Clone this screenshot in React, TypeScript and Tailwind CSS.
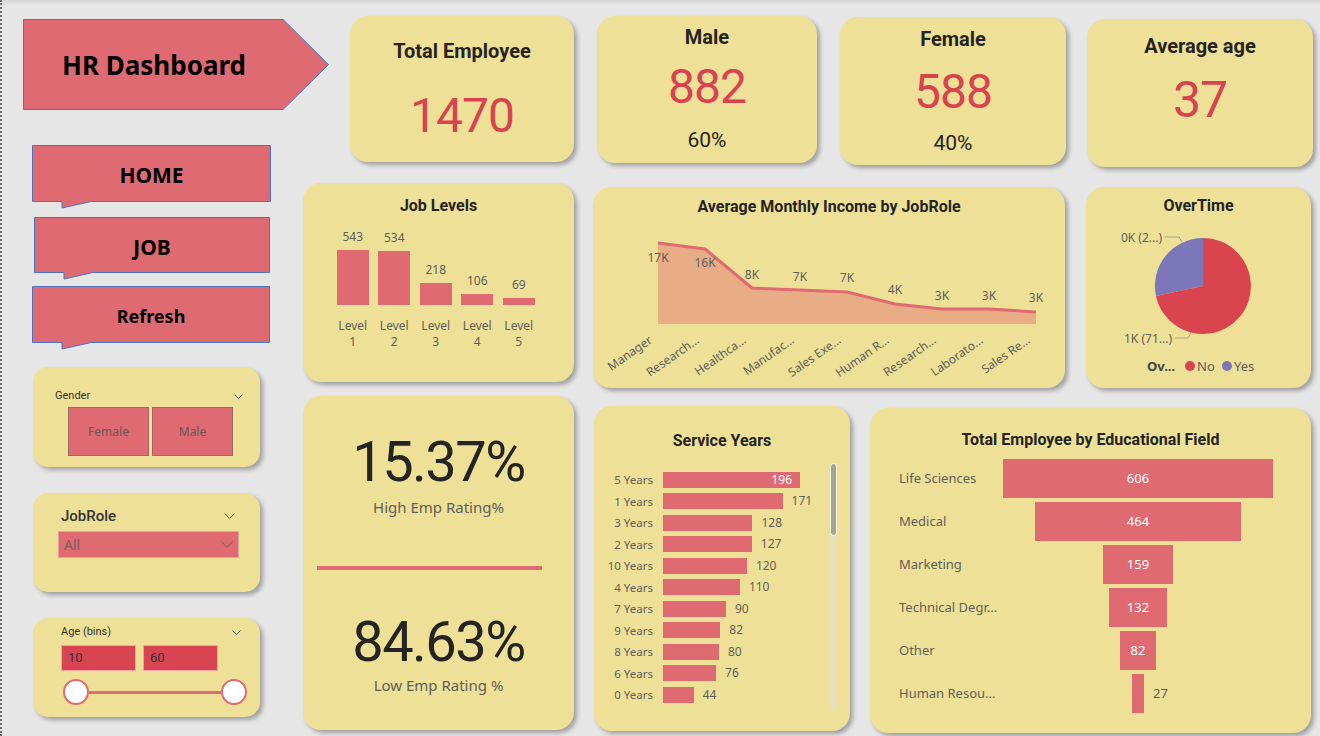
import React from 'react';

const card = 'bg-[#efe097] shadow-[3px_3px_4px_rgba(0,0,0,0.3)]';
const din = "font-['Roboto',sans-serif]";
const segoe = "font-['Noto_Sans',sans-serif]";
const red = '#df6a72';

const jobLevels: [string, number][] = [
    ['1', 543],
    ['2', 534],
    ['3', 218],
    ['4', 106],
    ['5', 69],
];

const incomePts: [number, number, string, string, number][] = [
    [65, 25, '17K', 'Manager', 40],
    [112, 31, '16K', 'Research...', 45],
    [159, 70, '8K', 'Healthca...', 57],
    [207, 72, '7K', 'Manufac...', 59],
    [254, 74, '7K', 'Sales Exe...', 60],
    [302, 86, '4K', 'Human R...', 72],
    [349, 91, '3K', 'Research...', 78],
    [396, 91, '3K', 'Laborato...', 78],
    [443, 94, '3K', 'Sales Re...', 80],
];

const serviceYears: [string, number][] = [
    ['5 Years', 196],
    ['1 Years', 171],
    ['3 Years', 128],
    ['2 Years', 127],
    ['10 Years', 120],
    ['4 Years', 110],
    ['7 Years', 90],
    ['9 Years', 82],
    ['8 Years', 80],
    ['6 Years', 76],
    ['0 Years', 44],
];

const eduFields: [string, number][] = [
    ['Life Sciences', 606],
    ['Medical', 464],
    ['Marketing', 159],
    ['Technical Degr...', 132],
    ['Other', 82],
    ['Human Resou...', 27],
];

const Chevron = ({ w = 10, h = 6, color = '#555' }: { w?: number; h?: number; color?: string }) => (
    <svg width={w} height={h} viewBox={`0 0 ${w} ${h}`}>
        <polyline points={`0.5,0.5 ${w / 2},${h - 0.5} ${w - 0.5},0.5`} fill="none" stroke={color} strokeWidth="1" />
    </svg>
);

const Callout = ({ label, w, h, className, textClass }: { label: string; w: number; h: number; className: string; textClass: string }) => (
    <div className={`relative flex items-center justify-center ${className}`} style={{ width: w, height: h }}>
        <svg className="absolute left-0 top-0 overflow-visible" width={w} height={h}>
            <polygon
                points={`0.5,0.5 ${w - 0.5},0.5 ${w - 0.5},${h - 0.5} 59,${h - 0.5} 30,${h + 6} 30,${h - 0.5} 0.5,${h - 0.5}`}
                fill={red}
                stroke="#4a74c0"
                strokeWidth="1"
            />
        </svg>
        <span className={`relative font-bold text-black ${segoe} ${textClass}`}>{label}</span>
    </div>
);

const App = () => {
    return (
        <div className="w-[1320px] h-[736px] flex overflow-hidden border-l-2 border-dotted border-[#6b6b6b] bg-[#e6e6e6] bg-[linear-gradient(#d4d4d4,#e6e6e6_5px)]">
            {/* left column: title, nav buttons, slicers */}
            <div className="w-[301px] shrink-0 flex flex-col">
                <div className="relative mt-[19px] ml-[21px] w-[306px] h-[91px] flex items-center pl-[39px]">
                    <svg className="absolute left-0 top-0" width="306" height="91">
                        <polygon points="0.5,0.5 260,0.5 305.5,45.5 260,90.5 0.5,90.5" fill={red} stroke="#4a74c0" strokeWidth="1" />
                    </svg>
                    <span className={`relative font-bold text-black text-[26px] leading-none ${segoe}`}>HR Dashboard</span>
                </div>
                <Callout label="HOME" w={239} h={57} className="mt-[35px] ml-[30px]" textClass="text-[21px] pt-[4px]" />
                <Callout label="JOB" w={236} h={56} className="mt-[15px] ml-[32px]" textClass="text-[21px] pt-[5px]" />
                <Callout label="Refresh" w={238} h={57} className="mt-[13px] ml-[30px]" textClass="text-[18px] pt-[3px]" />

                {/* Gender slicer */}
                <div className={`${card} mt-[24px] ml-[31px] w-[227px] h-[100px] rounded-[15px] flex flex-col`}>
                    <div className="mt-[22px] h-[14px] flex items-center justify-between pl-[22px] pr-[17px]">
                        <span className={`${din} text-[11px] text-[#333]`}>Gender</span>
                        <Chevron w={9} h={5} />
                    </div>
                    <div className="mt-[4px] ml-[35px] flex gap-[3px]">
                        <div className={`w-[81px] h-[49px] bg-[#df6a72] border border-[#9c6a62] flex items-center justify-center text-[12px] text-[#6b5656] ${segoe}`}>Female</div>
                        <div className={`w-[81px] h-[49px] bg-[#df6a72] border border-[#9c6a62] flex items-center justify-center text-[12px] text-[#6b5656] ${segoe}`}>Male</div>
                    </div>
                </div>

                {/* JobRole slicer */}
                <div className={`${card} mt-[26px] ml-[31px] w-[227px] h-[99px] rounded-[15px] flex flex-col`}>
                    <div className="mt-[14px] h-[18px] flex items-center justify-between pl-[28px] pr-[25px]">
                        <span className={`${din} text-[15px] font-medium text-[#333]`}>JobRole</span>
                        <Chevron w={11} h={6} />
                    </div>
                    <div className="mt-[6px] ml-[25px] w-[181px] h-[27px] bg-[#df6a72] border border-[#eba0a0] flex items-center justify-between pl-[5px] pr-[5px]">
                        <span className={`${segoe} text-[14px] text-[#7a5c5c]`}>All</span>
                        <Chevron w={12} h={7} color="#7a5c5c" />
                    </div>
                </div>

                {/* Age slicer */}
                <div className={`${card} mt-[26px] ml-[31px] w-[227px] h-[99px] rounded-[15px] flex flex-col`}>
                    <div className="mt-[7px] h-[14px] flex items-center justify-between pl-[28px] pr-[19px]">
                        <span className={`${din} text-[11px] text-[#333]`}>Age (bins)</span>
                        <Chevron w={9} h={5} />
                    </div>
                    <div className="mt-[6px] ml-[28px] flex gap-[7px]">
                        <div className={`w-[75px] h-[26px] bg-[#d84452] border border-[#eaa5a5] flex items-center pl-[6px] text-[13px] text-[#333] ${din}`}>10</div>
                        <div className={`w-[75px] h-[26px] bg-[#d84452] border border-[#eaa5a5] flex items-center pl-[6px] text-[13px] text-[#333] ${din}`}>60</div>
                    </div>
                    <div className="mt-[8px] ml-[30px] w-[184px] flex items-center">
                        <div className="w-[26px] h-[26px] rounded-full bg-white border-2 border-[#df6a72]" />
                        <div className="flex-1 h-[3px] bg-[#df6a72]" />
                        <div className="w-[26px] h-[26px] rounded-full bg-white border-2 border-[#df6a72]" />
                    </div>
                </div>
            </div>

            {/* right area */}
            <div className="flex-1 flex flex-col">
                {/* KPI row */}
                <div className="flex items-start pt-[16px]">
                    <div className={`${card} ml-[47px] w-[224px] h-[146px] rounded-[18px] flex flex-col items-center pt-[22px] ${din}`}>
                        <div className="text-[20px] leading-[26px] font-bold text-[#252423]">Total Employee</div>
                        <div className="mt-[24px] text-[48px] leading-[56px] tracking-[-1px] text-[#d8434f]">1470</div>
                    </div>
                    <div className={`${card} ml-[23px] w-[220px] h-[147px] rounded-[18px] flex flex-col items-center pt-[8px] ${din}`}>
                        <div className="text-[20px] leading-[26px] font-bold text-[#252423]">Male</div>
                        <div className="mt-[9px] text-[48px] leading-[56px] tracking-[-1px] text-[#d8434f]">882</div>
                        <div className="mt-[12px] text-[21px] leading-[26px] text-[#252423]">60%</div>
                    </div>
                    <div className={`${card} ml-[23px] mt-[1px] w-[226px] h-[148px] rounded-[18px] flex flex-col items-center pt-[9px] ${din}`}>
                        <div className="text-[20px] leading-[26px] font-bold text-[#252423]">Female</div>
                        <div className="mt-[12px] text-[48px] leading-[56px] tracking-[-1px] text-[#d8434f]">588</div>
                        <div className="mt-[10px] text-[21px] leading-[26px] text-[#252423]">40%</div>
                    </div>
                    <div className={`${card} ml-[21px] mt-[3px] w-[226px] h-[148px] rounded-[18px] flex flex-col items-center pt-[14px] ${din}`}>
                        <div className="text-[20px] leading-[26px] font-bold text-[#252423]">Average age</div>
                        <div className="mt-[13px] text-[50px] leading-[56px] tracking-[-1px] text-[#d8434f]">37</div>
                    </div>
                </div>

                {/* charts row */}
                <div className="flex items-start mt-[16px]">
                    <div className={`${card} w-[271px] h-[199px] rounded-[18px] flex flex-col`}>
                        <div className={`pt-[12px] text-center text-[16px] leading-[22px] font-bold text-[#252423] ${din}`}>Job Levels</div>
                        <div className="ml-[29px] h-[88px] flex items-end">
                            {jobLevels.map(([lvl, v]) => (
                                <div key={lvl} className="w-[41.5px] flex flex-col items-center">
                                    <span className={`text-[12px] leading-[14px] text-[#605e5c] mb-[6px] ${segoe}`}>{v}</span>
                                    <div className="w-[32px] bg-[#df6a72]" style={{ height: v * 0.1013 }} />
                                </div>
                            ))}
                        </div>
                        <div className="ml-[29px] mt-[13px] flex">
                            {jobLevels.map(([lvl]) => (
                                <div key={lvl} className={`w-[41.5px] text-center text-[12px] leading-[16px] text-[#605e5c] ${segoe}`}>
                                    Level
                                    <br />
                                    {lvl}
                                </div>
                            ))}
                        </div>
                    </div>

                    <div className={`${card} ml-[19px] mt-[4px] w-[472px] h-[201px] rounded-[18px] flex flex-col`}>
                        <div className={`pt-[9px] text-center text-[16px] leading-[22px] font-bold text-[#252423] ${din}`}>Average Monthly Income by JobRole</div>
                        <svg width="472" height="170" className={segoe}>
                            <path d={`M65,106 ${incomePts.map(([x, y]) => `L${x},${y}`).join(' ')} L443,106 Z`} fill="#e9ad86" />
                            <polyline
                                points={incomePts.map(([x, y]) => `${x},${y}`).join(' ')}
                                fill="none"
                                stroke={red}
                                strokeWidth="3"
                                strokeLinejoin="round"
                            />
                            {incomePts.map(([x, , lbl, , ly], i) => (
                                <text key={'v' + i} x={x} y={ly + 4} textAnchor="middle" fontSize="12" fill="#605e5c">
                                    {lbl}
                                </text>
                            ))}
                            {incomePts.map(([x, , , name], i) => (
                                <text
                                    key={'n' + i}
                                    x={x - 5}
                                    y={124}
                                    textAnchor="end"
                                    fontSize="12"
                                    fill="#605e5c"
                                    transform={`rotate(-35 ${x - 5} 124)`}
                                >
                                    {name}
                                </text>
                            ))}
                        </svg>
                    </div>

                    <div className={`${card} ml-[21px] mt-[4px] w-[225px] h-[201px] rounded-[18px] flex flex-col`}>
                        <div className={`pt-[8px] text-center text-[16px] leading-[22px] font-bold text-[#252423] ${din}`}>OverTime</div>
                        <svg width="225" height="171" className={segoe}>
                            <path d="M117,69 L117,21 A48,48 0 0,0 70,79 Z" fill="#7b77b9" />
                            <path d="M117,69 L70,79 A48,48 0 1,0 117,21 Z" fill="#d9444f" />
                            <polyline points="79,20 93,20 96,25" fill="none" stroke="#a9a48a" strokeWidth="1" />
                            <polyline points="89,121 102,121 105,116" fill="none" stroke="#a9a48a" strokeWidth="1" />
                            <text x="76" y="25" textAnchor="end" fontSize="12" fill="#605e5c">0K (2...)</text>
                            <text x="86" y="126" textAnchor="end" fontSize="12" fill="#605e5c">1K (71...)</text>
                            <text x="61" y="154" fontSize="13" fontWeight="bold" fill="#444">Ov...</text>
                            <circle cx="104" cy="149" r="5" fill="#d9444f" />
                            <text x="111" y="154" fontSize="13" fill="#605e5c">No</text>
                            <circle cx="141" cy="149" r="5" fill="#7b77b9" />
                            <text x="148" y="154" fontSize="13" fill="#605e5c">Yes</text>
                        </svg>
                    </div>
                </div>

                {/* bottom row */}
                <div className="flex items-start mt-[8px]">
                    <div className={`${card} w-[271px] h-[334px] rounded-[18px] flex flex-col items-center`}>
                        <div className={`pt-[34px] text-[56px] leading-[64px] tracking-[-1.5px] text-[#252423] ${din}`}>15.37%</div>
                        <div className={`mt-[3px] text-[15px] leading-[20px] text-[#605e5c] ${segoe}`}>High Emp Rating%</div>
                        <div className="mt-[49px] self-start ml-[14px] w-[225px] h-[4px] bg-[#df6a72]" />
                        <div className={`mt-[40px] text-[56px] leading-[64px] tracking-[-1.5px] text-[#252423] ${din}`}>84.63%</div>
                        <div className={`mt-[1px] text-[15px] leading-[20px] text-[#605e5c] ${segoe}`}>Low Emp Rating %</div>
                    </div>

                    <div className={`${card} relative ml-[20px] mt-[10px] w-[256px] h-[325px] rounded-[18px] flex flex-col`}>
                        <div className={`pt-[24px] text-center text-[16px] leading-[22px] font-bold text-[#252423] ${din}`}>Service Years</div>
                        <div className="mt-[17px] flex flex-col">
                            {serviceYears.map(([lbl, v], i) => (
                                <div key={lbl} className={`h-[21.5px] flex items-center text-[11.5px] ${segoe}`}>
                                    <span className="w-[59px] text-right text-[#605e5c]">{lbl}</span>
                                    <div
                                        className="ml-[10px] h-[16px] bg-[#df6a72] flex items-center justify-end pr-[8px]"
                                        style={{ width: v * 0.699 }}
                                    >
                                        {i === 0 && <span className="text-white text-[12px]">{v}</span>}
                                    </div>
                                    {i > 0 && <span className="ml-[9px] text-[12px] text-[#605e5c]">{v}</span>}
                                </div>
                            ))}
                        </div>
                        <div className="absolute left-[236px] top-[57px] w-[7px] h-[247px] rounded-full bg-[#e8dfb8]">
                            <div className="h-[73px] rounded-full bg-[#aaa58a] border border-white" />
                        </div>
                    </div>

                    <div className={`${card} ml-[20px] mt-[12px] w-[441px] h-[325px] rounded-[18px] flex flex-col`}>
                        <div className={`pt-[21px] text-center text-[16px] leading-[22px] font-bold text-[#252423] ${din}`}>Total Employee by Educational Field</div>
                        <div className="mt-[8px] flex flex-col gap-[4px]">
                            {eduFields.map(([lbl, v]) => (
                                <div key={lbl} className={`h-[39px] flex items-center ${segoe}`}>
                                    <span className="w-[130px] pl-[29px] text-[13px] text-[#605e5c] whitespace-nowrap">{lbl}</span>
                                    <div className="w-[276px] flex justify-center">
                                        <div
                                            className="relative h-[39px] bg-[#df6a72] flex items-center justify-center text-[13px] text-white"
                                            style={{ width: v * 0.444 }}
                                        >
                                            {v > 50 ? v : <span className="absolute left-full ml-[9px] text-[#605e5c]">{v}</span>}
                                        </div>
                                    </div>
                                </div>
                            ))}
                        </div>
                    </div>
                </div>
            </div>
        </div>
    );
};

export default App;
